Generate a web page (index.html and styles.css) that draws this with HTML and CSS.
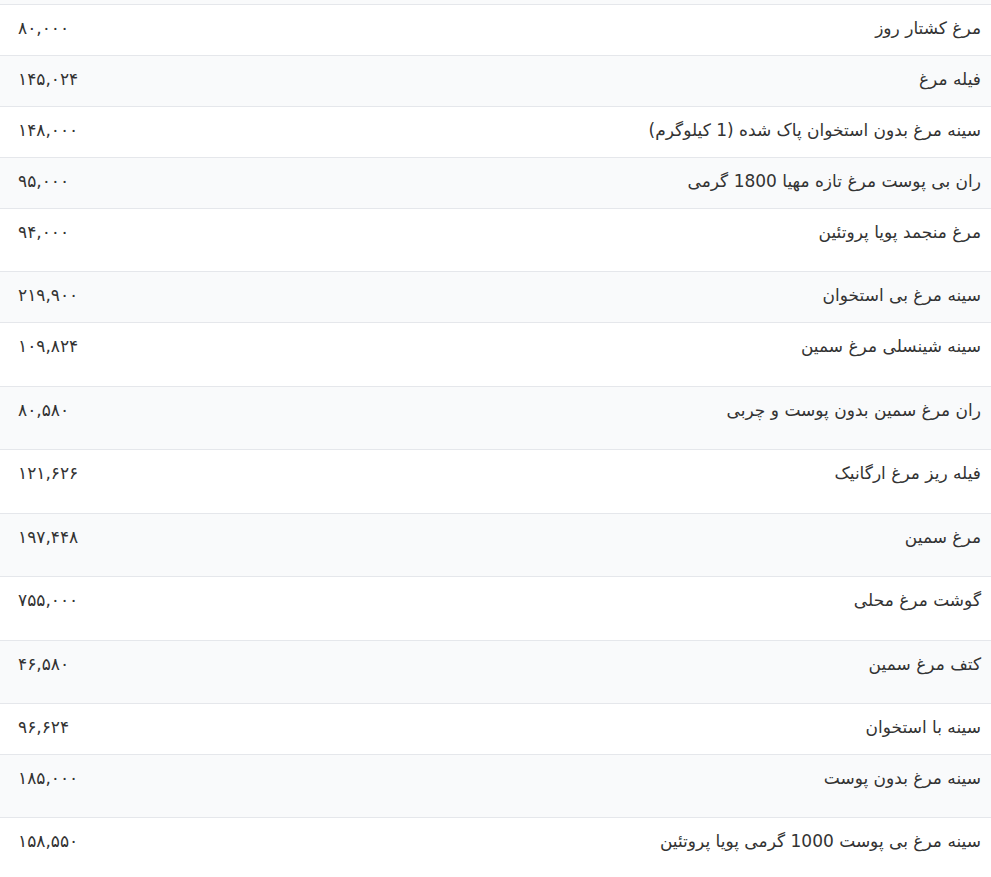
FILE: index.html
```html
<!DOCTYPE html>
<html lang="fa" dir="rtl">
<head>
<meta charset="utf-8">
<title>قیمت مرغ</title>
<link rel="stylesheet" href="styles.css">
</head>
<body>
<div class="table-wrap">
<table class="price-table">
<tbody>
<tr><td class="name">مرغ کشتار روز</td><td class="price">۸۰,۰۰۰</td></tr>
<tr><td class="name">فیله مرغ</td><td class="price">۱۴۵,۰۲۴</td></tr>
<tr><td class="name">سینه مرغ بدون استخوان پاک شده (1 کیلوگرم)</td><td class="price">۱۴۸,۰۰۰</td></tr>
<tr><td class="name">ران بی پوست مرغ تازه مهیا 1800 گرمی</td><td class="price">۹۵,۰۰۰</td></tr>
<tr class="tall"><td class="name">مرغ منجمد پویا پروتئین</td><td class="price">۹۴,۰۰۰</td></tr>
<tr><td class="name">سینه مرغ بی استخوان</td><td class="price">۲۱۹,۹۰۰</td></tr>
<tr class="tall"><td class="name">سینه شینسلی مرغ سمین</td><td class="price">۱۰۹,۸۲۴</td></tr>
<tr class="tall"><td class="name">ران مرغ سمین بدون پوست و چربی</td><td class="price">۸۰,۵۸۰</td></tr>
<tr class="tall"><td class="name">فیله ریز مرغ ارگانیک</td><td class="price">۱۲۱,۶۲۶</td></tr>
<tr class="tall"><td class="name">مرغ سمین</td><td class="price">۱۹۷,۴۴۸</td></tr>
<tr class="tall"><td class="name">گوشت مرغ محلی</td><td class="price">۷۵۵,۰۰۰</td></tr>
<tr class="tall"><td class="name">کتف مرغ سمین</td><td class="price">۴۶,۵۸۰</td></tr>
<tr><td class="name">سینه با استخوان</td><td class="price">۹۶,۶۲۴</td></tr>
<tr class="tall"><td class="name">سینه مرغ بدون پوست</td><td class="price">۱۸۵,۰۰۰</td></tr>
<tr class="tall"><td class="name">سینه مرغ بی پوست 1000 گرمی پویا پروتئین</td><td class="price">۱۵۸,۵۵۰</td></tr>
</tbody>
</table>
</div>
</body>
</html>
```
FILE: styles.css
```css
html, body {
  margin: 0;
  padding: 0;
  background: #ffffff;
}
body {
  font-family: "DejaVu Sans", "Noto Sans Arabic", sans-serif;
  font-size: 17px;
  color: #333333;
}
.table-wrap {
  padding-top: 4px;
  background: #f9fafb;
}
.price-table {
  width: 100%;
  border-collapse: collapse;
  direction: rtl;
}
.price-table td {
  border-top: 1px solid #e5e7eb;
  height: 51px;
  box-sizing: border-box;
  padding: 0;
  vertical-align: top;
  line-height: 24px;
  padding-top: 11px;
}
.price-table tr {
  background: #ffffff;
}
.price-table tr:nth-child(even) {
  background: #f9fafb;
}
.price-table tr.tall td {
  height: 63.43px;
}
.name {
  text-align: right;
  padding-right: 10px !important;
}
.price {
  text-align: left;
  padding-left: 18px !important;
  width: 200px;
}
```
